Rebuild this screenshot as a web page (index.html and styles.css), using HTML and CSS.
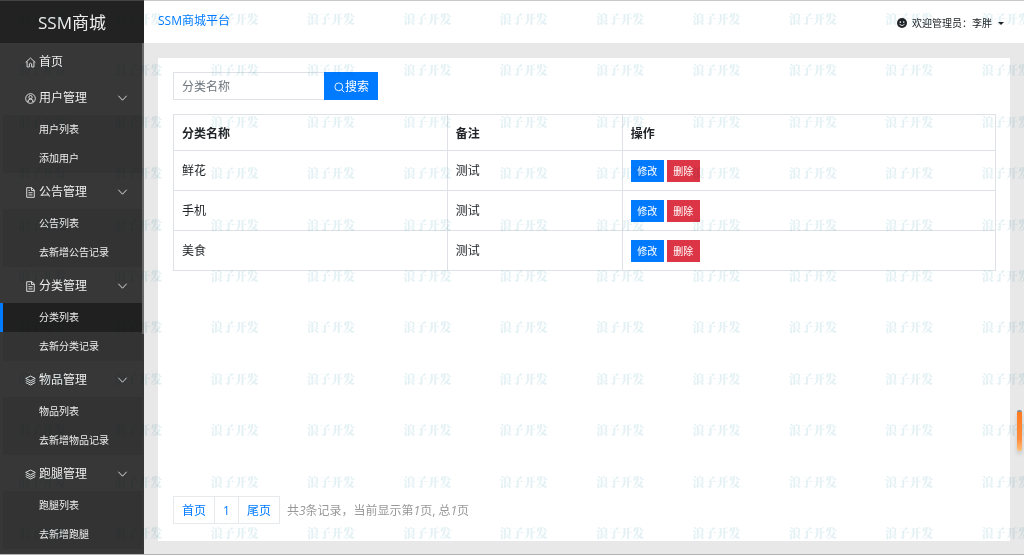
FILE: index.html
```html
<!DOCTYPE html>
<html lang="zh-CN">
<head>
<meta charset="utf-8">
<title>SSM商城</title>
<link rel="stylesheet" href="styles.css">
</head>
<body>
<svg class="sprite" aria-hidden="true">
  <symbol id="home" viewBox="0 0 16 16"><path d="M1 8 8 1.5 15 8M3 6.5V14.5H6.3V10Q8 8 9.7 10V14.5H13V6.5"/></symbol>
  <symbol id="user" viewBox="0 0 16 16"><circle cx="8" cy="8" r="7"/><circle cx="8" cy="6" r="2.4"/><path d="M4 12.6Q4.5 8.8 8 8.8T12 12.6M4 12.2H5.5M10.5 12.2H12"/></symbol>
  <symbol id="doc" viewBox="0 0 16 16"><path d="M2.5 1H10L13.5 4.5V15H2.5ZM9.5 1V5H13.5M5 5H7M5 8.3H11M5 11.5H11"/></symbol>
  <symbol id="layers" viewBox="0 0 16 16"><path d="M8 1.5 15 5 8 8.5 1 5ZM1 8 8 11.5 15 8M1 11 8 14.5 15 11"/></symbol>
  <symbol id="down" viewBox="0 0 16 16"><path d="M2 4 8 10.5 14 4"/></symbol>
  <symbol id="search" viewBox="0 0 16 16"><circle cx="7" cy="7" r="5.7"/><path d="M11 11 15 15"/></symbol>
</svg>
<div class="app">
  <aside class="sidebar">
    <h1 class="brand">SSM商城</h1>
    <nav class="menu">
      <a class="menu-head" href="#"><svg class="icon"><use href="#home"/></svg><span>首页</span></a>
      <button class="menu-head" type="button"><svg class="icon"><use href="#user"/></svg><span>用户管理</span><svg class="icon arrow"><use href="#down"/></svg></button>
      <div class="submenu"><a href="#">用户列表</a><a href="#">添加用户</a></div>
      <button class="menu-head" type="button"><svg class="icon"><use href="#doc"/></svg><span>公告管理</span><svg class="icon arrow"><use href="#down"/></svg></button>
      <div class="submenu"><a href="#">公告列表</a><a href="#">去新增公告记录</a></div>
      <button class="menu-head" type="button"><svg class="icon"><use href="#doc"/></svg><span>分类管理</span><svg class="icon arrow"><use href="#down"/></svg></button>
      <div class="submenu"><a class="active" href="#">分类列表</a><a href="#">去新分类记录</a></div>
      <button class="menu-head" type="button"><svg class="icon"><use href="#layers"/></svg><span>物品管理</span><svg class="icon arrow"><use href="#down"/></svg></button>
      <div class="submenu"><a href="#">物品列表</a><a href="#">去新增物品记录</a></div>
      <button class="menu-head" type="button"><svg class="icon"><use href="#layers"/></svg><span>跑腿管理</span><svg class="icon arrow"><use href="#down"/></svg></button>
      <div class="submenu"><a href="#">跑腿列表</a><a href="#">去新增跑腿</a></div>
      <span class="menu-scroll"></span>
    </nav>
  </aside>
  <div class="content">
    <header class="topbar">
      <a class="site" href="#">SSM商城平台</a>
      <button class="account" type="button">
        <svg class="face" viewBox="0 0 16 16"><circle cx="8" cy="8" r="8" fill="#212529"/><circle cx="5.3" cy="6.5" r="1.3" fill="#fff"/><circle cx="10.7" cy="6.5" r="1.3" fill="#fff"/><path d="M4 10Q8 14.5 12 10" fill="none" stroke="#fff" stroke-width="1.3"/></svg>
        <span>欢迎管理员：李胖</span><i class="caret"></i>
      </button>
    </header>
    <main class="panel">
      <form class="search">
        <input type="text" placeholder="分类名称" aria-label="分类名称">
        <button type="button"><svg class="icon"><use href="#search"/></svg>搜索</button>
      </form>
      <table class="list">
        <colgroup><col class="col-name"><col class="col-note"><col></colgroup>
        <thead><tr><th>分类名称</th><th>备注</th><th>操作</th></tr></thead>
        <tbody>
          <tr><td>鲜花</td><td>测试</td><td><div class="actions"><button class="edit" type="button">修改</button><button class="delete" type="button">删除</button></div></td></tr>
          <tr><td>手机</td><td>测试</td><td><div class="actions"><button class="edit" type="button">修改</button><button class="delete" type="button">删除</button></div></td></tr>
          <tr><td>美食</td><td>测试</td><td><div class="actions"><button class="edit" type="button">修改</button><button class="delete" type="button">删除</button></div></td></tr>
        </tbody>
      </table>
      <footer class="pager">
        <nav class="pages"><a href="#">首页</a><a href="#">1</a><a href="#">尾页</a></nav>
        <span class="summary">共<i>3</i>条记录，当前显示第<i>1</i>页, 总<i>1</i>页</span>
      </footer>
    </main>
  </div>
  <div class="watermark" aria-hidden="true"></div>
  <span class="side-handle"></span>
</div>
<script src="app.js"></script>
</body>
</html>
```
FILE: styles.css
```css
* { box-sizing: border-box; }
body {
  margin: 0;
  font-family: "Open Sans", "Noto Sans CJK SC", sans-serif;
  font-size: 12px;
  line-height: 18px;
  color: #212529;
}
a { text-decoration: none; color: inherit; }
button, input { font: inherit; border: 0; border-radius: 0; margin: 0; padding: 0; color: inherit; }
.sprite { position: absolute; width: 0; height: 0; }
.icon { width: 11px; height: 11px; flex: none; fill: none; stroke: currentColor; stroke-width: 1.3; }

.app {
  position: relative;
  display: flex;
  min-height: 100vh;
  overflow: hidden;
  background: #e8e8e8;
  border-bottom: 1px solid #b5b0b3;
}
.sidebar { width: 144px; flex: none; background: #373737; color: #eee; }
.brand {
  margin: 0;
  height: 43px;
  line-height: 44px;
  border-top: 1px solid #444;
  background: #222;
  font-size: 17px;
  font-weight: 400;
  text-align: center;
}
.menu { position: relative; }
.menu-head {
  display: flex;
  align-items: center;
  gap: 3px;
  width: 100%;
  height: 36px;
  padding: 2px 16px 0 25px;
  background: none;
}
.arrow { margin-left: auto; }
.submenu { margin: 0 2px 0 3px; background: #333; font-size: 10px; }
.submenu a { display: block; height: 29px; line-height: 29px; padding-left: 36px; }
.submenu .active { margin-left: -3px; border-left: 3px solid #007bff; background: #202020; }
.menu-scroll { position: absolute; top: 0; right: 0; width: 2px; height: 291px; background: #686868; }

.content { flex: 1; min-width: 0; display: flex; flex-direction: column; }
.topbar {
  display: flex;
  justify-content: space-between;
  height: 43px;
  padding: 0 20px 0 14px;
  border-top: 1px solid #c8c8c8;
  background: #fff;
}
.site { padding-top: 11px; color: #007bff; }
.account { display: flex; align-items: center; padding-top: 2px; background: none; font-size: 10px; }
.face { width: 10px; height: 10px; margin-right: 5px; }
.caret { margin-left: 6px; border: 3px solid transparent; border-top-color: #212529; border-bottom: 0; }

.panel {
  flex: 1;
  display: flex;
  flex-direction: column;
  margin: 15px 14px 13px;
  padding: 14px 14px 17px 15px;
  background: #fff;
}
.search { display: flex; height: 28px; }
.search input { width: 151px; padding: 2px 8px 0; border: 1px solid #dee2e6; border-right: 0; background: #fff; }
.search input::placeholder { color: #6c757d; opacity: 1; }
.search button { display: flex; align-items: center; padding: 2px 9px 0 10px; background: #007bff; color: #fff; }
.list { width: 100%; margin-top: 14px; table-layout: fixed; border-collapse: collapse; }
.col-name { width: 33.3%; }
.col-note { width: 21.3%; }
.list th, .list td { padding: 9px 8px 8px; border: 1px solid #dee2e6; text-align: left; vertical-align: middle; }
.list th { padding: 10px 8px 7px; }
.actions { display: flex; gap: 3px; }
.actions button { width: 33px; height: 22px; color: #fff; font-size: 10px; }
.edit { background: #007bff; }
.delete { background: #dc3545; }

.pager { display: flex; align-items: center; gap: 7px; margin-top: auto; }
.pages { display: flex; border: 1px solid #e6eaed; color: #007bff; }
.pages a { padding: 5px 8px 3px; }
.pages a + a { border-left: 1px solid #e6eaed; }
.summary { padding-top: 2px; color: #999; }

.watermark {
  position: absolute;
  top: -7px;
  left: 18px;
  display: grid;
  grid-template-columns: repeat(11, 1fr);
  grid-template-rows: repeat(11, 1fr);
  align-items: center;
  width: calc(100% + 36px);
  height: calc(100% + 12px);
  pointer-events: none;
  color: #e4f1f4;
  mix-blend-mode: multiply;
  font-family: "Noto Serif CJK SC", "Noto Sans CJK SC", serif;
  font-weight: 900;
}
.side-handle {
  position: absolute;
  top: 410px;
  right: 2px;
  width: 5px;
  height: 41px;
  border-top: 2px solid #8a8f94;
  border-radius: 2px;
  background: linear-gradient(#ff7a1f, #ff8c3c 70%, #ffc27a);
  box-shadow: 0 3px 4px rgba(0, 0, 0, 0.15);
}
```
FILE: app.js
```js
const watermark = document.querySelector(".watermark");
for (let i = 0; i < 121; i++) {
  const mark = document.createElement("span");
  mark.textContent = "浪子开发";
  watermark.append(mark);
}
```
